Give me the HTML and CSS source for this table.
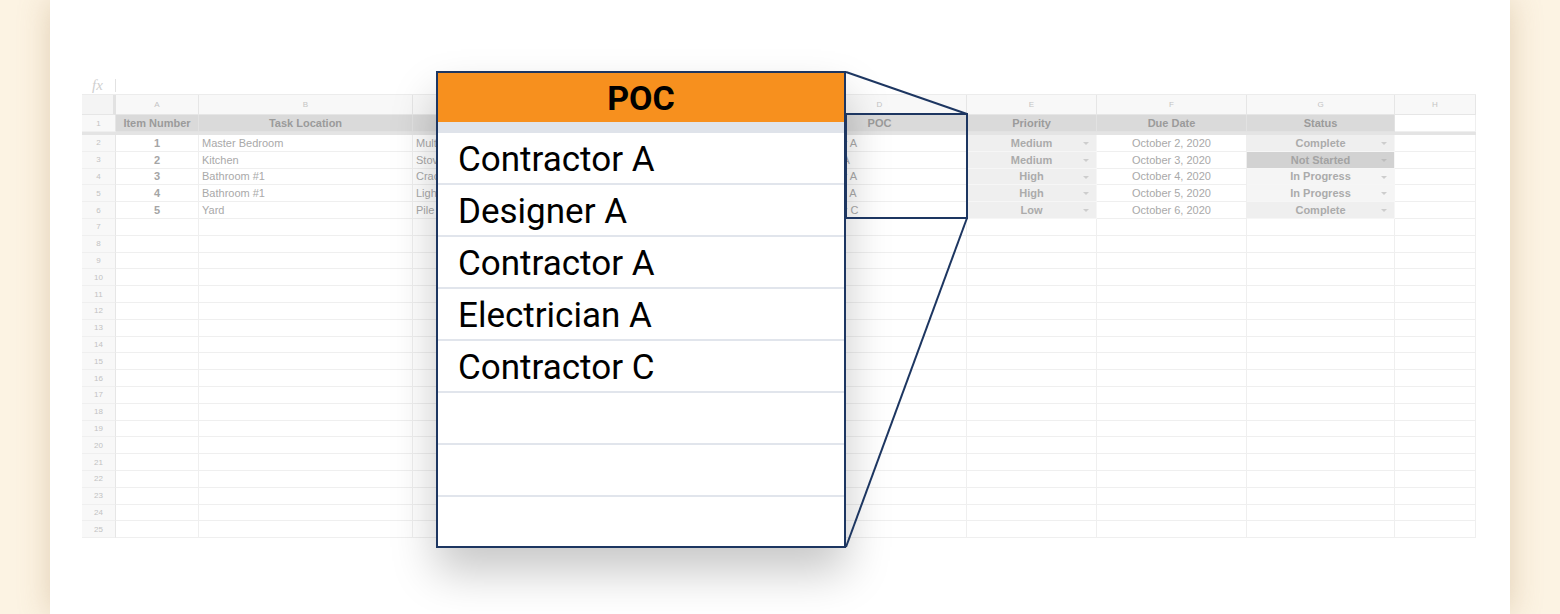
FILE: index.html
```html
<!DOCTYPE html>
<html lang="en">
<head>
<meta charset="utf-8">
<title>POC column</title>
<link rel="stylesheet" href="styles.css">
</head>
<body>
<div class="panel">
  <div class="content">
    <div class="fxbar"><span class="fx">fx</span><span class="fxsep"></span></div>
    <div class="sheet">
      <div class="c ch corner"></div><div class="c ch">A</div><div class="c ch">B</div><div class="c ch">C</div><div class="c ch">D</div><div class="c ch">E</div><div class="c ch">F</div><div class="c ch">G</div><div class="c ch">H</div>

      <div class="c rn">1</div><div class="c hd">Item Number</div><div class="c hd">Task Location</div><div class="c hd">Task Description</div><div class="c hd">POC</div><div class="c hd">Priority</div><div class="c hd">Due Date</div><div class="c hd">Status</div><div class="c"></div>
      <div class="freeze"></div>

      <div class="c rn">2</div><div class="c num">1</div><div class="c">Master Bedroom</div><div class="c">Multiple outlets</div><div class="c">Contractor A</div><div class="c dd">Medium</div><div class="c ctr">October 2, 2020</div><div class="c dd">Complete</div><div class="c"></div>
      <div class="c rn">3</div><div class="c num">2</div><div class="c">Kitchen</div><div class="c">Stove burner</div><div class="c">Designer A</div><div class="c dd">Medium</div><div class="c ctr">October 3, 2020</div><div class="c dd dark">Not Started</div><div class="c"></div>
      <div class="c rn">4</div><div class="c num">3</div><div class="c">Bathroom #1</div><div class="c">Cracked tile</div><div class="c">Contractor A</div><div class="c dd">High</div><div class="c ctr">October 4, 2020</div><div class="c dd light">In Progress</div><div class="c"></div>
      <div class="c rn">5</div><div class="c num">4</div><div class="c">Bathroom #1</div><div class="c">Light fixture</div><div class="c">Electrician A</div><div class="c dd">High</div><div class="c ctr">October 5, 2020</div><div class="c dd light">In Progress</div><div class="c"></div>
      <div class="c rn">6</div><div class="c num">5</div><div class="c">Yard</div><div class="c">Pile of debris</div><div class="c">Contractor C</div><div class="c dd">Low</div><div class="c ctr">October 6, 2020</div><div class="c dd">Complete</div><div class="c"></div>

      <div class="c rn">7</div><div class="c"></div><div class="c"></div><div class="c"></div><div class="c"></div><div class="c"></div><div class="c"></div><div class="c"></div><div class="c"></div>
      <div class="c rn">8</div><div class="c"></div><div class="c"></div><div class="c"></div><div class="c"></div><div class="c"></div><div class="c"></div><div class="c"></div><div class="c"></div>
      <div class="c rn">9</div><div class="c"></div><div class="c"></div><div class="c"></div><div class="c"></div><div class="c"></div><div class="c"></div><div class="c"></div><div class="c"></div>
      <div class="c rn">10</div><div class="c"></div><div class="c"></div><div class="c"></div><div class="c"></div><div class="c"></div><div class="c"></div><div class="c"></div><div class="c"></div>
      <div class="c rn">11</div><div class="c"></div><div class="c"></div><div class="c"></div><div class="c"></div><div class="c"></div><div class="c"></div><div class="c"></div><div class="c"></div>
      <div class="c rn">12</div><div class="c"></div><div class="c"></div><div class="c"></div><div class="c"></div><div class="c"></div><div class="c"></div><div class="c"></div><div class="c"></div>
      <div class="c rn">13</div><div class="c"></div><div class="c"></div><div class="c"></div><div class="c"></div><div class="c"></div><div class="c"></div><div class="c"></div><div class="c"></div>
      <div class="c rn">14</div><div class="c"></div><div class="c"></div><div class="c"></div><div class="c"></div><div class="c"></div><div class="c"></div><div class="c"></div><div class="c"></div>
      <div class="c rn">15</div><div class="c"></div><div class="c"></div><div class="c"></div><div class="c"></div><div class="c"></div><div class="c"></div><div class="c"></div><div class="c"></div>
      <div class="c rn">16</div><div class="c"></div><div class="c"></div><div class="c"></div><div class="c"></div><div class="c"></div><div class="c"></div><div class="c"></div><div class="c"></div>
      <div class="c rn">17</div><div class="c"></div><div class="c"></div><div class="c"></div><div class="c"></div><div class="c"></div><div class="c"></div><div class="c"></div><div class="c"></div>
      <div class="c rn">18</div><div class="c"></div><div class="c"></div><div class="c"></div><div class="c"></div><div class="c"></div><div class="c"></div><div class="c"></div><div class="c"></div>
      <div class="c rn">19</div><div class="c"></div><div class="c"></div><div class="c"></div><div class="c"></div><div class="c"></div><div class="c"></div><div class="c"></div><div class="c"></div>
      <div class="c rn">20</div><div class="c"></div><div class="c"></div><div class="c"></div><div class="c"></div><div class="c"></div><div class="c"></div><div class="c"></div><div class="c"></div>
      <div class="c rn">21</div><div class="c"></div><div class="c"></div><div class="c"></div><div class="c"></div><div class="c"></div><div class="c"></div><div class="c"></div><div class="c"></div>
      <div class="c rn">22</div><div class="c"></div><div class="c"></div><div class="c"></div><div class="c"></div><div class="c"></div><div class="c"></div><div class="c"></div><div class="c"></div>
      <div class="c rn">23</div><div class="c"></div><div class="c"></div><div class="c"></div><div class="c"></div><div class="c"></div><div class="c"></div><div class="c"></div><div class="c"></div>
      <div class="c rn">24</div><div class="c"></div><div class="c"></div><div class="c"></div><div class="c"></div><div class="c"></div><div class="c"></div><div class="c"></div><div class="c"></div>
      <div class="c rn">25</div><div class="c"></div><div class="c"></div><div class="c"></div><div class="c"></div><div class="c"></div><div class="c"></div><div class="c"></div><div class="c"></div>
    </div>
  </div>

  <div class="popup">
    <div class="popup-head">POC</div>
    <div class="popup-strip"></div>
    <div class="popup-row">Contractor A</div>
    <div class="popup-row">Designer A</div>
    <div class="popup-row">Contractor A</div>
    <div class="popup-row">Electrician A</div>
    <div class="popup-row">Contractor C</div>
    <div class="popup-row"></div>
    <div class="popup-row"></div>
    <div class="popup-row last"></div>
  </div>

  <svg class="callout" width="1460" height="614" viewBox="0 0 1460 614" aria-hidden="true">
    <g fill="none" stroke="#1d3661" stroke-width="2">
      <line x1="796" y1="72" x2="917" y2="114"/>
      <line x1="796" y1="547" x2="917" y2="218"/>
      <rect x="796" y="114" width="121" height="104"/>
    </g>
  </svg>
</div>
</body>
</html>
```

FILE: styles.css
```css
html, body {
  margin: 0;
  padding: 0;
}

body {
  width: 1560px;
  height: 614px;
  overflow: hidden;
  background: #fcf3e3;
  font-family: "Liberation Sans", Arial, sans-serif;
}

.panel {
  position: relative;
  margin-left: 50px;
  width: 1460px;
  height: 614px;
  background: #ffffff;
  box-shadow: 0 0 30px rgba(170, 135, 80, 0.32);
}

.content {
  padding: 77px 0 0 32px;
}

.fxbar {
  display: flex;
  align-items: center;
  height: 17px;
}

.fx {
  margin-left: 10px;
  font-family: "Liberation Serif", "Times New Roman", serif;
  font-style: italic;
  font-size: 15px;
  color: #cfcfcf;
  line-height: 1;
}

.fxsep {
  width: 1px;
  height: 13px;
  margin-left: 12px;
  background: #e2e2e2;
}

.sheet {
  display: grid;
  grid-template-columns: 34px 83px 214px 380px 174px 130px 150px 148px 81px;
  grid-template-rows: 20px 17px 3px repeat(24, 16.8px);
  width: 1394px;
  border-top: 1px solid #ececec;
  box-sizing: border-box;
}

.c {
  box-sizing: border-box;
  display: flex;
  align-items: center;
  padding: 0 3px;
  border-right: 1px solid #efefef;
  border-bottom: 1px solid #efefef;
  font-size: 11px;
  color: #a9a9a9;
  white-space: nowrap;
  overflow: hidden;
}

.ch {
  justify-content: center;
  background: #f8f8f8;
  color: #c4c4c4;
  font-size: 8px;
  border-color: #e6e6e6;
}

.corner {
  background: #f4f4f4;
  border-right: 3px solid #e2e2e2;
}

.rn {
  justify-content: center;
  background: #f8f8f8;
  color: #c2c2c2;
  font-size: 8px;
  border-right-color: #e6e6e6;
}

.hd {
  justify-content: center;
  background: #dadada;
  color: #9b9b9b;
  font-weight: bold;
  border-color: #e2e2e2;
}

.freeze {
  grid-column: 1 / -1;
  background: #e4e4e4;
}

.num {
  justify-content: center;
  font-weight: bold;
  color: #a5a5a5;
}

.ctr {
  justify-content: center;
}

.dd {
  position: relative;
  justify-content: center;
  background: #efefef;
  font-weight: bold;
  color: #ababab;
  border-color: #f6f6f6;
}

.dd::after {
  content: "";
  position: absolute;
  right: 7px;
  top: 7px;
  border-left: 3px solid transparent;
  border-right: 3px solid transparent;
  border-top: 3px solid #cdcdcd;
}

.dd.dark {
  background: #d2d2d2;
  color: #a3a3a3;
}

.dd.dark::after {
  border-top-color: #bdbdbd;
}

.dd.light {
  background: #f5f5f5;
}

.popup {
  position: absolute;
  left: 386px;
  top: 71px;
  width: 410px;
  height: 477px;
  box-sizing: border-box;
  display: flex;
  flex-direction: column;
  border: 2px solid #1d3661;
  background: #ffffff;
  box-shadow: 0 24px 42px rgba(0, 0, 0, 0.22);
  font-family: Roboto, "Noto Sans", sans-serif;
  z-index: 2;
}

.popup-head {
  height: 49px;
  flex: none;
  display: flex;
  align-items: center;
  justify-content: center;
  background: #f7901e;
  color: #000000;
  font-weight: 700;
  font-size: 34px;
}

.popup-strip {
  height: 11px;
  flex: none;
  background: #dfe3ea;
}

.popup-row {
  height: 52px;
  flex: none;
  box-sizing: border-box;
  display: flex;
  align-items: center;
  padding: 3px 0 0 20px;
  border-bottom: 2px solid #e1e5ec;
  font-size: 35px;
  color: #000000;
}

.popup-row.last {
  flex: 1;
  height: auto;
  border-bottom: none;
}

.callout {
  position: absolute;
  left: 0;
  top: 0;
  z-index: 3;
  pointer-events: none;
}
```
